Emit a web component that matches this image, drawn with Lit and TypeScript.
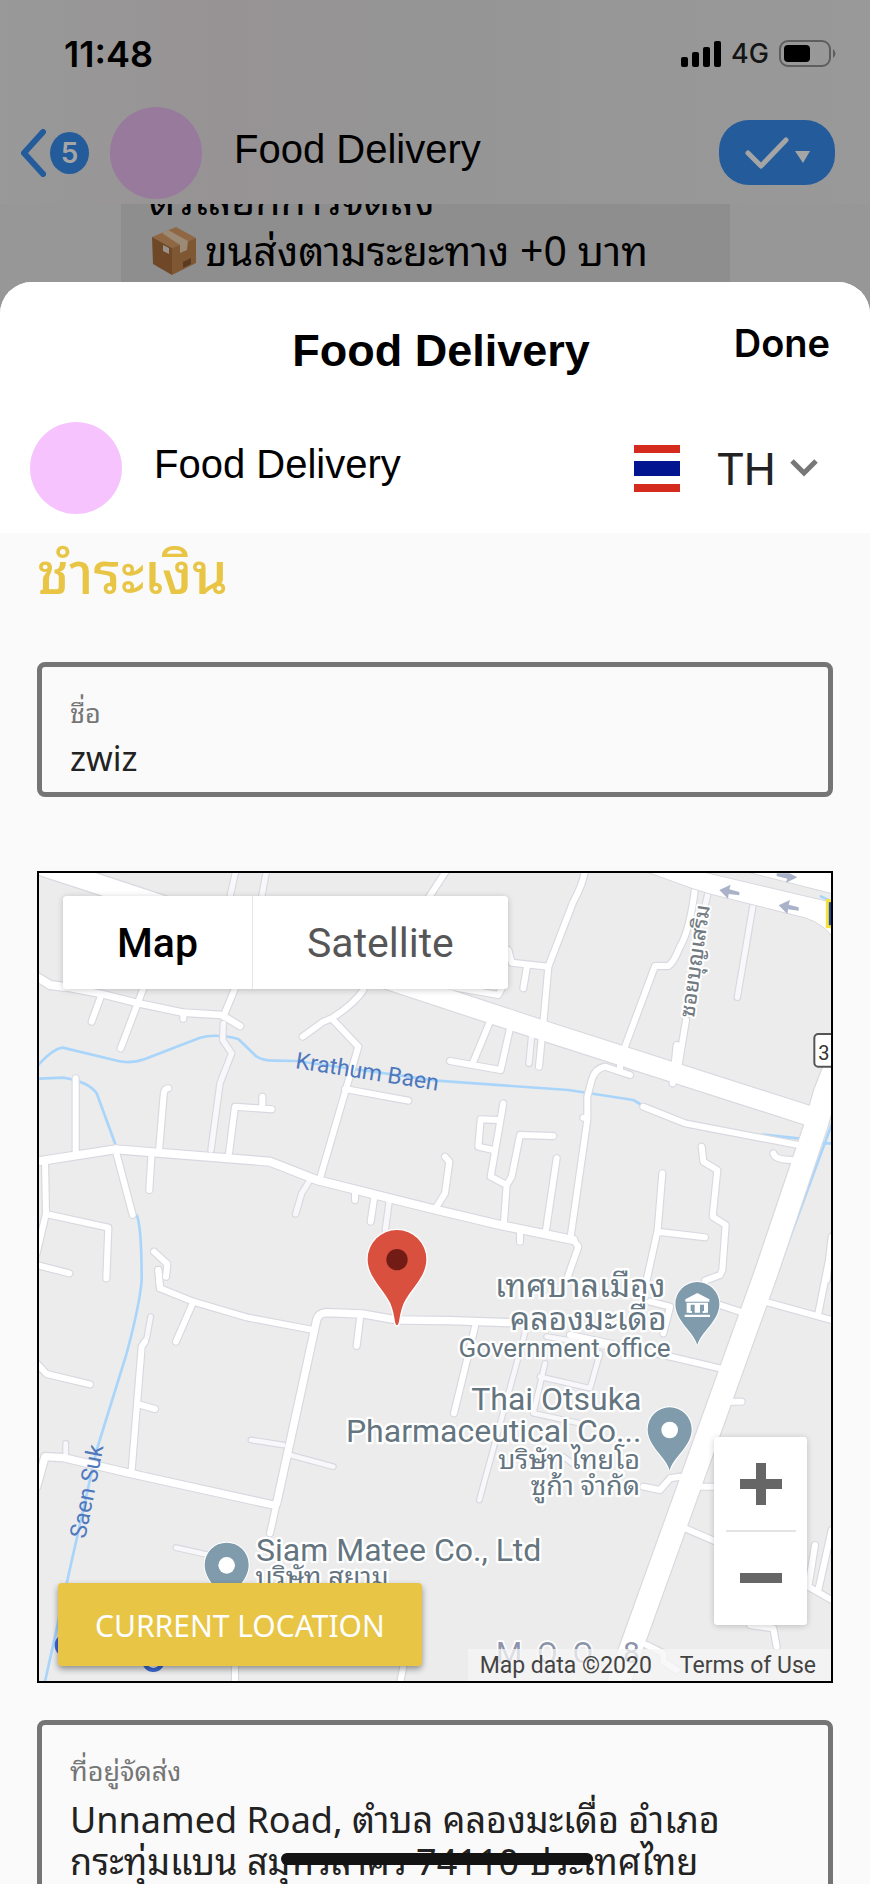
import { LitElement, html, svg, css } from "lit";
import { customElement, state } from "lit/decorators.js";

type Road = { x?: number; y?: number; w: number; d: string; minor?: boolean };

// Map drawing units are a third of a pixel; x and y shift a road into its quadrant.
const E = 1200;
const S = 1230;

const roads: Road[] = [
  { x: E, y: S, w: 14, minor: true, d: "M290 170L148 690M345 280L310 430L450 460M330 320L480 355L510 250M350 200L560 235M400 560L440 590" },
  { y: S, w: 14, minor: true, d: "M663 510L760 525M780 555L910 590M438 833L560 860M362 140L350 205M107 520V555" },
  { w: 16, minor: true, d: "M580 490L578 540L605 580L570 670L543 870M618 30L600 110M710 30L695 110M1078 1020L1066 1110M840 960L815 1000L797 1062" },
  { x: E, w: 16, minor: true, d: "M970 130L922 412M835 95L820 160M305 525L297 610" },
  { w: 18, d: "M215 402L185 485M340 385L272 565M460 458V476M615 385L580 470M1250 30L1195 115M137 655V880M415 685Q403 685 401 705L388 862M597 880L615 740L725 748M697 745V710M258 875L308 1065M365 875L358 990M45 905L48 1060L20 1180M48 1062L235 1103L229 1255M20 1215L118 1240" },
  { w: 18, d: "M1000 390Q975 430 905 475L880 485L818 530M905 475L985 560L870 955M945 687L1135 722M975 1000V1020M1033 1010L1022 1085M372 1175L412 1212L408 1250M385 1230L390 1285" },
  { x: E, w: 18, d: "M465 30Q460 70 430 125L355 320L340 490M235 270L245 308L355 320M290 325L280 385M60 380L205 405L215 385M795 85Q780 210 750 260Q730 310 715 318L675 318L585 560M768 480L745 620M740 555L728 670M180 485L130 605M60 603L212 630L240 505M335 535L327 620M600 645L525 620Q495 625 485 660L472 710L472 780L422 1130M570 600V632M460 773H472" },
  { x: E, w: 18, d: "M640 740L765 790L1105 855M1030 880Q1035 900 1085 900M220 730L182 950L230 975M370 828L270 825L245 950L230 975L222 1085M205 780L152 778L145 860L190 870M380 895L348 1110M270 1110V1145M430 1140L445 1160L410 1260M697 940L683 1110L650 1260M683 1115L825 1132M815 860L820 905L862 930L848 1070L887 1095L877 1230L870 1245L825 1262M45 890L58 905L45 1000L20 1040M1205 1130L1190 1260" },
  { y: S, w: 18, d: "M385 0L390 55L490 95L650 142L850 180M490 95L438 215M345 215L335 230L305 600M322 402L375 417M20 280L50 312L180 343M990 145L980 228M615 1190V1240M1120 1190L1110 1240M720 790L740 700" },
  { x: E, y: S, w: 18, d: "M135 170L72 430M420 195L560 225L730 262L870 295M870 105L930 125M700 190L720 110L660 95M1005 95L1205 150M1165 130L1195 -20M935 395H895M640 650L690 660L720 625L750 620M810 650H860M765 775L870 820M1155 825L1135 950L1205 990M1165 960L1205 780M960 1065L1030 1075L1040 1130M650 1125L700 1150L700 1175L740 1200" },
  { w: 24, d: "M20 905L50 900L255 868L720 905L860 960L1200 1045L1410 1095L1630 1140M20 350L60 375L100 380" },
  { w: 20, d: "M100 380L215 402L325 430L460 458L575 465L630 498" },
  { y: S, w: 22, d: "M740 700L860 150Q865 130 890 128L1000 132L1100 150L1260 152L1435 158M20 650L45 560L100 563L300 610L730 705" },
  { w: 58, d: "M20 12L225 79L1540 512L2330 765" },
  { w: 68, d: "M2440 560L2385 700L2360 790L2208 1240L1812 2340L1765 2470" },
];

const water =
  "M20 620Q70 565 98 563L265 603Q300 612 345 597L510 533Q560 520 625 537L680 590Q700 602 730 602L800 603L1220 662L1615 690L1810 720L1835 735M2200 824L2305 835M20 656L100 653Q175 665 200 700L255 850M320 1065Q335 1100 335 1260Q330 1330 290 1480L200 1770L110 2170L45 2465M2410 780L2240 1240L2205 1330M2380 850H2410";

const drawRoads = (casing: boolean) =>
  roads.map(
    (r) => svg`<path
      transform="translate(${r.x ?? 0} ${r.y ?? 0})"
      stroke=${casing ? "#d8d9e0" : r.minor ? "#f8f8fa" : "#fff"}
      stroke-width=${r.w + (casing ? 7 : 0)} d=${r.d} />`
  );

@customElement("area-map")
export class AreaMap extends LitElement {
  @state() private view = "map";

  static styles = css`
    :host { display: block; position: relative; border: 2px solid #000; background: #ececec; }
    .canvas { display: block; width: 100%; height: auto; }
    .canvas text { font-family: Roboto, "Noto Sans Thai Looped", "Noto Sans Thai", "Noto Sans", sans-serif; paint-order: stroke; stroke-linejoin: round; }
    .place { fill: #64757f; stroke: #fff; stroke-width: 14px; }
    .name { font-size: 96px; }
    .sub { font-size: 78px; }
    .sub.thai { font-size: 81px; }
    .river { fill: #4f78bd; font-size: 69px; }
    .street { fill: #727a82; stroke: #fff; stroke-width: 12px; font-size: 63px; font-weight: 500; }
    .quarter { fill: #8d93a8; stroke: #fff; stroke-width: 10px; font-size: 90px; }
    .shield { fill: #333; font-size: 60px; }
    button { border: 0; padding: 0; font-family: Roboto, sans-serif; background: #fff; cursor: pointer; }
    .types { position: absolute; left: 24px; top: 23px; display: flex; border-radius: 4px; box-shadow: 0 1px 6px rgba(0, 0, 0, 0.2); }
    .types button { height: 93px; padding: 0 54px; font-size: 41px; color: #565656; border-radius: 0 4px 4px 0; }
    .types button:first-child { border-right: 1px solid #e6e6e6; border-radius: 4px 0 0 4px; }
    .types button[aria-pressed="true"] { color: #000; font-weight: 500; }
    .zoom { position: absolute; right: 24px; bottom: 56px; width: 93px; border-radius: 4px; background: #fff; box-shadow: 0 1px 6px rgba(0, 0, 0, 0.2); display: flex; flex-direction: column; align-items: center; }
    .zoom button { width: 93px; height: 94px; display: grid; place-items: center; border-radius: 4px; }
    .zoom hr { width: 70px; height: 2px; margin: -1px 0; border: 0; background: #e4e4e4; z-index: 1; }
    .here { position: absolute; left: 19px; bottom: 15px; }
    .here button { height: 83px; padding: 2px 37px 0; border-radius: 4px; background: #e8c545; color: #fff; font-family: "Noto Sans", sans-serif; font-size: 30px; box-shadow: 0 3px 6px rgba(0, 0, 0, 0.4); }
    .legal { position: absolute; right: 0; bottom: 0; display: flex; gap: 28px; padding: 2px 15px 0 12px; background: rgba(245, 245, 245, 0.75); font: 23px/30px Roboto, sans-serif; color: #444; }
    .legal a { color: inherit; text-decoration: none; }
  `;

  private pin(x: number, y: number, mark: unknown) {
    return svg`<g transform="translate(${x} ${y})">
      <path d="M0 0C-8 -38 -66 -72 -66 -124A66 66 0 0 1 66 -124C66 -72 8 -38 0 0Z" fill="#7f9bac" stroke="#fff" stroke-width="6" paint-order="stroke" />
      ${mark}
    </g>`;
  }

  render() {
    const dot = svg`<circle cy="-122" r="25" fill="#fff" />`;
    return html`
      <svg class="canvas" viewBox="27 39 2376 2424" role="img" aria-label="Map">
        <g fill="none" stroke-linecap="round" stroke-linejoin="round">
          <path d=${water} stroke="#aad5fb" stroke-width="8" />
          ${drawRoads(true)}
          ${drawRoads(false)}
        </g>
        <g fill="#fff" stroke="#d8d9e0" stroke-width="3">
          <path d="M1850 36L1985 85L2040 102L2330 175Q2385 195 2410 235V128L2020 36Z" />
          <path d="M2150 36L2410 102V36Z" />
        </g>
        <path d="M2370 108L2400 122" stroke="#aad5fb" stroke-width="8" />
        <g fill="#a9b2c8">
          <path d="M2068 90L2102 74L2098 88L2128 96V106L2096 102L2094 116Z" />
          <path d="M2246 136L2280 120L2276 134L2306 142V152L2274 148L2272 162Z" />
          <path d="M2302 52L2268 68L2272 56L2240 48V40H2278Z" />
        </g>
        <rect x="2392" y="122" width="30" height="78" fill="#244c9a" stroke="#f7e23c" stroke-width="9" />
        <rect x="2353" y="522" width="90" height="98" rx="12" fill="#fff" stroke="#555" stroke-width="6" />
        <text class="shield" x="2365" y="601">3</text>

        <text class="river" transform="translate(794 624) rotate(9)">Krathum Baen</text>
        <text class="river" transform="translate(166 2038) rotate(-79)">Saen Suk</text>
        <text class="street" transform="translate(1992 474) rotate(-82)">ซอยบุญเสริม</text>
        <text class="quarter" x="1398" y="2410">M&#160;&#160;O&#160;&#160;O&#160;&#160;&#160;&#160;8</text>

        <g class="place" text-anchor="end">
          <text class="name" x="1906" y="1312">เทศบาลเมือง</text>
          <text class="name" x="1910" y="1410">คลองมะเดื่อ</text>
          <text class="sub" x="1922" y="1491">Government office</text>
          <text class="name" x="1834" y="1650">Thai Otsuka</text>
          <text class="name" x="1834" y="1746">Pharmaceutical Co...</text>
          <text class="sub thai" x="1830" y="1826">บริษัท ไทยโอ</text>
          <text class="sub thai" x="1830" y="1904">ซูก้า จำกัด</text>
        </g>
        <g class="place">
          <text class="name" x="678" y="2102">Siam Matee Co., Ltd</text>
          <text class="sub thai" x="676" y="2178">บริษัท สยาม</text>
        </g>

        ${this.pin(590, 2238, dot)}
        ${this.pin(1919, 1832, dot)}
        ${this.pin(
          2002,
          1456,
          svg`<path fill="#fff" d="M-36 -138L0 -157L36 -138V-131H-36ZM-32 -128H32V-98H20V-122H8V-98H-8V-122H-20V-98H-32ZM-38 -92H38V-85H-38ZM-24 -103H-16V-97H-24ZM16 -103H24V-97H16Z" />`
        )}
        <g transform="translate(1101 1396)">
          <path d="M0 0C-8 0 -5 -30 -20 -66C-42 -112 -88 -145 -88 -198A88 88 0 0 1 88 -198C88 -145 42 -112 20 -66C5 -30 8 0 0 0Z" fill="#d9503f" stroke="#fff" stroke-width="8" paint-order="stroke" />
          <circle cy="-197" r="32" fill="#731c16" />
        </g>
        <circle cx="110" cy="2356" r="30" fill="#fff" stroke="#3f6ad8" stroke-width="12" />
        <circle cx="370" cy="2402" r="28" fill="#fff" stroke="#3f6ad8" stroke-width="12" />
      </svg>

      <div class="types">
        <button aria-pressed=${this.view === "map"} @click=${() => (this.view = "map")}>Map</button>
        <button aria-pressed=${this.view === "satellite"} @click=${() => (this.view = "satellite")}>Satellite</button>
      </div>
      <div class="zoom">
        <button aria-label="Zoom in"><svg width="42" height="42"><path d="M21 0V42M0 21H42" stroke="#666" stroke-width="10" /></svg></button>
        <hr />
        <button aria-label="Zoom out"><svg width="42" height="42"><path d="M0 21H42" stroke="#666" stroke-width="10" /></svg></button>
      </div>
      <div class="legal"><span>Map data ©2020</span><a href="#terms">Terms of Use</a></div>
      <div class="here"><button>CURRENT LOCATION</button></div>
    `;
  }
}

@customElement("app-root")
export class AppRoot extends LitElement {
  static styles = css`
    :host { display: flex; flex-direction: column; position: relative; height: 100vh; overflow: hidden; background: #999; color: #000; font-family: "Liberation Sans", "Noto Sans Thai", sans-serif; }
    * { box-sizing: border-box; }
    button { border: 0; padding: 0; background: none; font: inherit; color: inherit; cursor: pointer; }
    .behind { flex: none; background: linear-gradient(90deg, #999 0%, #979394 25%, #959595 50%, #999 100%); }
    .status { display: flex; align-items: center; height: 107px; padding: 0 34px 0 64px; font-family: Inter, sans-serif; }
    .time { flex: 1; font-size: 36px; font-weight: 600; }
    .status svg { display: block; }
    .net { margin: 0 10px; font-size: 27px; font-weight: 500; color: #151515; }
    .chat { display: flex; align-items: center; height: 97px; padding: 0 35px 6px 20px; }
    .back { display: flex; align-items: center; gap: 4px; }
    .count { display: grid; place-items: center; width: 39px; height: 42px; border-radius: 50%; background: #245c9b; color: #a5a5a5; font: 600 28px Inter, sans-serif; }
    .avatar { width: 92px; height: 92px; border-radius: 50%; background: #f7c3ff; }
    .chat .avatar { margin: 0 32px 0 21px; background: #987a9c; }
    .title { flex: 1; padding-bottom: 8px; font-size: 40px; line-height: 48px; }
    .done-all { display: flex; align-items: center; justify-content: center; gap: 6px; width: 116px; height: 65px; border-radius: 30px; background: #245c9b; }
    .log { height: 98px; margin-bottom: -20px; padding: 0 140px 0 121px; background: #979797; }
    .bubble { display: flex; flex-direction: column; justify-content: flex-end; height: 98px; padding: 0 0 26px 28px; overflow: hidden; background: #8e8e8e; font-family: "Noto Sans", "Noto Sans Thai Looped", "Noto Sans Thai", sans-serif; font-size: 41px; line-height: 51px; }
    .line { flex: none; display: flex; align-items: center; gap: 6px; white-space: nowrap; }
    .sheet { flex: 1; position: relative; border-radius: 32px 32px 0 0; background: #fafafa; overflow: hidden; }
    .top { background: #fff; }
    .bar { display: grid; grid-template-columns: 1fr auto 1fr; height: 139px; padding: 0 40px 18px 52px; align-items: center; }
    .bar h1 { grid-column: 2; margin: 0; padding-top: 16px; font-size: 45px; line-height: 52px; }
    .bar button { justify-self: end; font: 600 38px/48px Inter, sans-serif; }
    .shop { display: flex; align-items: center; height: 112px; padding: 0 52px 18px 30px; }
    .shop .title { margin-left: 32px; }
    .lang { display: flex; align-items: center; }
    .lang select { appearance: none; border: 0; margin: 4px 14px 0 37px; padding: 0; background: none; color: #222; font: 45px/54px Roboto, sans-serif; }
    .form { padding: 0 37px; }
    h2 { margin: 0 0 51px; color: #e8c545; font: 500 57px/78px "Noto Sans", "Noto Sans Thai Looped", "Noto Sans Thai", sans-serif; }
    .field { display: flex; flex-direction: column; padding: 27px 28px 0; border: 5px solid #757575; border-radius: 8px; font-family: "Noto Sans", "Noto Sans Thai Looped", "Noto Sans Thai", sans-serif; }
    .field label { color: #757575; font-size: 27px; line-height: 38px; }
    .field input, .field textarea { width: 100%; padding: 0; border: 0; outline: 0; background: none; resize: none; overflow: hidden; color: #222; font-family: inherit; font-size: 34px; line-height: 42px; }
    .field input { height: 60px; padding-bottom: 8px; }
    .field textarea { height: 180px; padding-top: 9px; font-size: 36px; }
    area-map { margin: 74px 0 37px; }
    .home { position: absolute; left: 50%; bottom: 19px; width: 312px; height: 12px; margin-left: -154px; border-radius: 6px; background: #131313; }
  `;

  render() {
    return html`
      <div class="behind">
        <div class="status">
          <span class="time">11:48</span>
          <svg width="40" height="26" viewBox="0 0 40 26">
            <rect y="16" width="7" height="10" rx="2" /><rect x="11" y="11" width="7" height="15" rx="2" />
            <rect x="22" y="6" width="7" height="20" rx="2" /><rect x="33" width="7" height="26" rx="2" />
          </svg>
          <span class="net">4G</span>
          <svg width="57" height="28" viewBox="0 0 57 28">
            <rect x="1" y="1" width="50" height="25" rx="8" fill="none" stroke="#5e5e5e" stroke-width="2" />
            <rect x="5" y="5" width="26" height="17" rx="4" />
            <path d="M54 9Q59 13.500 54 18Z" fill="#5e5e5e" />
          </svg>
        </div>
        <div class="chat">
          <button class="back" aria-label="Back">
            <svg width="26" height="48" viewBox="0 0 26 48"><path d="M23 3L4 24L23 45" fill="none" stroke="#245c9b" stroke-width="6" stroke-linecap="round" stroke-linejoin="round" /></svg>
            <span class="count">5</span>
          </button>
          <span class="avatar"></span>
          <span class="title">Food Delivery</span>
          <button class="done-all" aria-label="Mark done">
            <svg width="44" height="32" viewBox="0 0 44 32"><path d="M3 16L16 29L41 3" fill="none" stroke="#a5a5a5" stroke-width="5" stroke-linecap="round" stroke-linejoin="round" /></svg>
            <svg width="15" height="20" viewBox="0 0 15 20"><path d="M0 8H15L8 20Z" fill="#a5a5a5" /></svg>
          </button>
        </div>
        <div class="log">
          <div class="bubble">
            <span class="line">ตัวเลือกการจัดส่ง</span>
            <span class="line">
              <svg width="50" height="48" viewBox="0 0 50 48">
                <path d="M3 10L27 0L47 11L23 21Z" fill="#8f6843" /><path d="M3 10L23 21V48L4 37Z" fill="#6f4827" />
                <path d="M23 21L47 11V36L23 48Z" fill="#7f5733" /><path d="M13 6L19 3L39 14L38 23L31 26V18Z" fill="#9a8a76" />
                <path d="M14 18L20 21V27L14 24Z" fill="#99918a" /><path d="M34 35L42 31V37L34 41Z" fill="#5a3a20" />
              </svg>
              ขนส่งตามระยะทาง +0 บาท
            </span>
          </div>
        </div>
      </div>

      <main class="sheet">
        <header class="top">
          <div class="bar"><h1>Food Delivery</h1><button>Done</button></div>
          <div class="shop">
            <span class="avatar"></span>
            <span class="title">Food Delivery</span>
            <div class="lang">
              <svg width="46" height="47" viewBox="0 0 46 47"><path fill="#d52b1e" d="M0 0H46V8H0ZM0 39H46V47H0Z" /><path fill="#00158f" d="M0 16H46V31H0Z" /></svg>
              <select aria-label="Language"><option>TH</option></select>
              <svg width="28" height="18" viewBox="0 0 28 18"><path d="M2 2L14 14L26 2" fill="none" stroke="#777" stroke-width="5" /></svg>
            </div>
          </div>
        </header>
        <form class="form">
          <h2>ชำระเงิน</h2>
          <div class="field">
            <label for="name">ชื่อ</label>
            <input id="name" value="zwiz" />
          </div>
          <area-map></area-map>
          <div class="field">
            <label for="address">ที่อยู่จัดส่ง</label>
            <textarea id="address" .value=${"Unnamed Road, ตำบล คลองมะเดื่อ อำเภอ กระทุ่มแบน สมุทรสาคร 74110 ประเทศไทย"}></textarea>
          </div>
        </form>
      </main>
      <div class="home"></div>
    `;
  }
}
